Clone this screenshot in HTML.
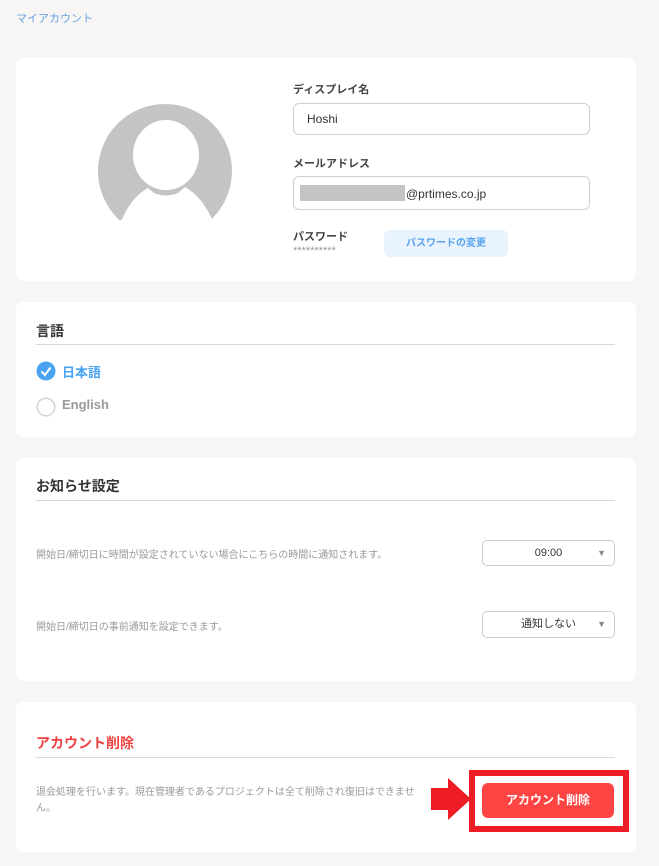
<!DOCTYPE html>
<html><head><meta charset="utf-8"><style>
body{margin:0;width:659px;height:866px;background:#f7f6f5;font-family:"Liberation Sans","Noto Sans CJK JP",sans-serif;position:relative;overflow:hidden}
.a{position:absolute}
.card{position:absolute;left:16px;width:620px;background:#fff;border-radius:7px}
.lbl{position:absolute;font-size:11px;font-weight:bold;color:#444}
.inp{position:absolute;left:293px;width:295px;border:1px solid #cfcfcf;border-radius:6px;background:#fff}
.h{position:absolute;left:36px;font-size:14px;color:#333;font-weight:bold}
.line{position:absolute;left:36px;width:579px;height:1px;background:#d9d9d9}
.sel{position:absolute;left:482px;width:131px;border:1px solid #ccc;border-radius:5px;font-size:11px;color:#333;text-align:center}
.sel span{position:absolute;right:8px;font-size:9px;color:#888}
.t{position:absolute;left:36px;font-size:10px;color:#999;white-space:nowrap}
</style></head><body>
<div class="a" style="left:16px;top:10px;font-size:11px;color:#6aa0e6">マイアカウント</div>

<div class="card" style="top:58px;height:223px"></div>
<svg class="a" style="left:96px;top:102px" width="140" height="122" viewBox="0 0 140 122">
<defs><clipPath id="c"><circle cx="69" cy="69" r="67"/></clipPath></defs>
<g clip-path="url(#c)"><rect width="140" height="140" fill="#c4c4c4"/>
<ellipse cx="70" cy="53" rx="33" ry="35" fill="#fff"/>
<path d="M24 122 Q34 96 52 86 L58 91 Q70 96 82 91 L89 85 Q108 96 118 122 Z" fill="#fff"/>
<rect x="0" y="118" width="140" height="30" fill="#fff"/></g>
</svg>
<div class="lbl" style="left:293px;top:81px">ディスプレイ名</div>
<div class="inp" style="top:103px;height:30px"><div class="a" style="left:13px;top:8px;font-size:12px;color:#333">Hoshi</div></div>
<div class="lbl" style="left:293px;top:155px">メールアドレス</div>
<div class="inp" style="top:176px;height:32px"><div class="a" style="left:6px;top:8px;width:105px;height:16px;background:#c4c4c4"></div><div class="a" style="left:112px;top:10px;font-size:12px;color:#333">@prtimes.co.jp</div></div>
<div class="lbl" style="left:293px;top:228px">パスワード</div>
<div class="a" style="left:293px;top:245px;font-size:11px;color:#999">**********</div>
<div class="a" style="left:384px;top:230px;width:124px;height:27px;background:#e8f3fe;border-radius:6px;color:#5aa3f0;font-size:10px;font-weight:bold;text-align:center;line-height:27px">パスワードの変更</div>

<div class="card" style="top:302px;height:135px"></div>
<div class="h" style="top:321px">言語</div>
<div class="line" style="top:344px"></div>
<svg class="a" style="left:36px;top:361px" width="20" height="20"><circle cx="10" cy="10" r="9.5" fill="#4aa3f2"/><path d="M5.5 10.5 L9 14 L14.5 6.5" stroke="#fff" stroke-width="2" fill="none"/></svg>
<div class="a" style="left:62px;top:362px;font-size:13px;font-weight:bold;color:#4aa3f2">日本語</div>
<svg class="a" style="left:36px;top:397px" width="20" height="20"><circle cx="10" cy="10" r="8.8" fill="none" stroke="#d4d4d4" stroke-width="1.5"/></svg>
<div class="a" style="left:62px;top:397px;font-size:13px;font-weight:bold;color:#999">English</div>

<div class="card" style="top:458px;height:223px"></div>
<div class="h" style="top:476px">お知らせ設定</div>
<div class="line" style="top:500px"></div>
<div class="t" style="top:546px">開始日/締切日に時間が設定されていない場合にこちらの時間に通知されます。</div>
<div class="sel" style="top:540px;height:24px;line-height:24px">09:00<span>▼</span></div>
<div class="t" style="top:618px">開始日/締切日の事前通知を設定できます。</div>
<div class="sel" style="top:611px;height:25px;line-height:25px">通知しない<span>▼</span></div>

<div class="card" style="top:702px;height:150px"></div>
<div class="h" style="top:733px;color:#f04141">アカウント削除</div>
<div class="line" style="top:757px"></div>
<div class="t" style="top:785px;line-height:16px">退会処理を行います。現在管理者であるプロジェクトは全て削除され復旧はできませ<br>ん。</div>
<svg class="a" style="left:431px;top:778px" width="40" height="42"><path d="M0 10 H17 V0 L40 21 L17 42 V32 H0Z" fill="#ee1c25"/></svg>
<div class="a" style="left:469px;top:770px;width:148px;height:50px;border:6px solid #ee1c25"></div>
<div class="a" style="left:482px;top:783px;width:132px;height:35px;background:#ff4444;border-radius:6px;color:#fff;font-size:12px;font-weight:bold;text-align:center;line-height:35px">アカウント削除</div>
</body></html>
